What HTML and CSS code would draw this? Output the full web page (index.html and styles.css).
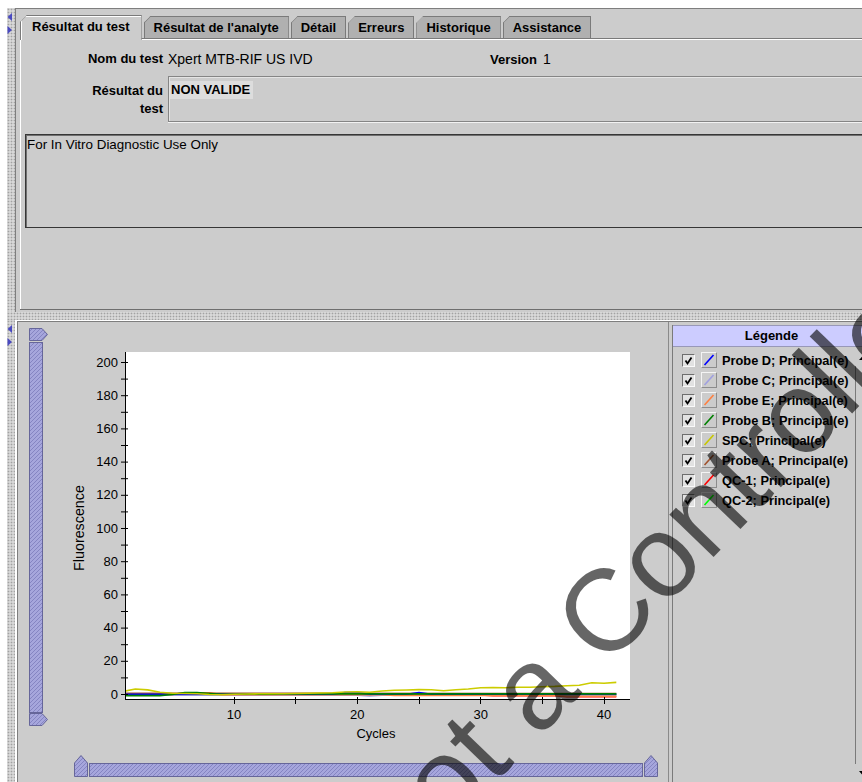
FILE: index.html
```html
<!DOCTYPE html>
<html lang="fr">
<head>
<meta charset="utf-8">
<title>Résultat du test</title>
<link rel="stylesheet" href="styles.css">
</head>
<body>
<div class="app">
  <div class="row row-top">
    <div class="gutter"></div>
    <div class="divider-v">
      <svg class="arrow" viewBox="0 0 6 8"><polygon points="5,0 0.5,4 5,8"/></svg>
      <svg class="arrow" viewBox="0 0 6 8"><polygon points="0.5,0 5,4 0.5,8"/></svg>
    </div>
    <div class="pane pane-top">
      <div class="tabs">
        <div class="tab selected">Résultat du test</div>
        <div class="tab">Résultat de l'analyte</div>
        <div class="tab">Détail</div>
        <div class="tab">Erreurs</div>
        <div class="tab">Historique</div>
        <div class="tab">Assistance</div>
      </div>
      <div class="tab-body">
        <div class="form">
          <div class="lbl">Nom du test</div>
          <div class="val">
            <span class="test-name">Xpert MTB-RIF US IVD</span>
            <b class="ver-lbl">Version</b>
            <span class="ver">1</span>
          </div>
          <div class="lbl lbl-multi">Résultat du<br>test</div>
          <div class="result-box"><span class="result">NON VALIDE</span></div>
          <div class="note">For In Vitro Diagnostic Use Only</div>
        </div>
      </div>
    </div>
  </div>

  <div class="divider-h"></div>

  <div class="row row-bottom">
    <div class="gutter"></div>
    <div class="divider-v">
      <svg class="arrow" viewBox="0 0 6 8"><polygon points="5,0 0.5,4 5,8"/></svg>
      <svg class="arrow" viewBox="0 0 6 8"><polygon points="0.5,0 5,4 0.5,8"/></svg>
    </div>
    <div class="pane pane-bottom">
      <div class="chart-panel">
        <div class="chart-row">
          <svg class="vslider" width="19" height="398" viewBox="0 0 19 398">
            <defs>
              <pattern id="hatch-v" width="4" height="4" patternUnits="userSpaceOnUse">
                <rect width="4" height="4" fill="#a6a6dc"/>
                <path d="M-1,1 L1,-1 M0,4 L4,0 M3,5 L5,3" stroke="#8585c2" stroke-width="1"/>
              </pattern>
            </defs>
            <path d="M0.5,0.5 H13 L18.5,6.5 L13,12.5 H0.5 Z" fill="url(#hatch-v)" stroke="#66669a"/>
            <rect x="0.5" y="14.5" width="13" height="370" fill="url(#hatch-v)" stroke="#66669a"/>
            <path d="M0.5,385.5 H13 L18.5,391.5 L13,397.5 H0.5 Z" fill="url(#hatch-v)" stroke="#66669a"/>
          </svg>

          <svg class="chart" width="605" height="405" viewBox="0 0 605 405">
            <defs>
              <clipPath id="plot-clip"><rect x="71" y="12" width="504" height="347"/></clipPath>
            </defs>
            <rect x="71" y="12" width="504" height="347" fill="#fff"/>

            <g class="series" clip-path="url(#plot-clip)" fill="none" stroke-width="1.6">
              <polyline stroke="#00ff00" points="68,354.8 561.3,354.8"/>
              <polyline stroke="#ff0000" points="68,355 425.7,355 438,355.6 499.7,355.6 512,356.8 561.3,356.8"/>
              <polyline stroke="#9999dd" points="68,355.2 302.3,355.2 314.7,356 327,355.2 561.3,355.2"/>
              <polyline stroke="#ff8040" points="68,354.5 117.3,354.5 129.7,352.8 154.3,352.8 166.7,354.6 327,354.6 339.3,355.5 499.7,355.5 512,356.3 561.3,356.3"/>
              <polyline stroke="#a0522d" points="68,353.3 240.7,353.4 561.3,353.5"/>
              <polyline stroke="#0000ff" points="68,354.3 277.7,354.3 290,352.6 302.3,352.6 314.7,354.3 351.7,354.3 364,352.6 376.3,354.3 561.3,354.3"/>
              <polyline stroke="#008000" points="68,355.6 105,355.6 117.3,354.5 129.7,352.6 142,352.6 154.3,353.5 166.7,354.2 216,354.2 228.3,353.9 561.3,353.9"/>
              <polyline stroke="#cccc00" points="68,351.5 80.3,349 92.7,349.9 105,352.3 117.3,353.2 129.7,353.5 142,353.7 154.3,354.5 166.7,354.8 179,354.3 191.3,354 203.7,353.8 216,353.7 228.3,353.8 240.7,353.5 253,353.2 265.3,353 277.7,352.7 290,352 302.3,351.8 314.7,352.3 327,351 339.3,350.2 351.7,350 364,349.6 376.3,349.7 388.7,350.7 401,349.7 413.3,349 425.7,347.8 438,347.5 450.3,347.8 462.7,347.2 475,347.2 487.3,346.7 499.7,346.4 512,345.8 524.3,345.3 536.7,342.8 549,343.2 561.3,342.4"/>
            </g>

            <g class="axes" stroke="#000" stroke-width="1" fill="none">
              <line x1="70.5" y1="12" x2="70.5" y2="360"/>
              <line x1="70" y1="359.5" x2="575" y2="359.5"/>
              <path d="M66,354.5H73 M66,337.9H73 M66,321.3H73 M66,304.7H73 M66,288.1H73 M66,271.5H73 M66,254.9H73 M66,238.3H73 M66,221.7H73 M66,205.1H73 M66,188.5H73 M66,171.9H73 M66,155.3H73 M66,138.7H73 M66,122.1H73 M66,105.5H73 M66,88.9H73 M66,72.3H73 M66,55.7H73 M66,39.1H73 M66,22.5H73"/>
              <path d="M179.5,357V364 M240.5,357V364 M302.5,357V364 M364.5,357V364 M425.5,357V364 M487.5,357V364 M549.5,357V364"/>
            </g>

            <g class="ticks-y" text-anchor="end">
              <text x="63" y="358.5">0</text>
              <text x="63" y="325.3">20</text>
              <text x="63" y="292.1">40</text>
              <text x="63" y="258.9">60</text>
              <text x="63" y="225.7">80</text>
              <text x="63" y="192.5">100</text>
              <text x="63" y="159.3">120</text>
              <text x="63" y="126.1">140</text>
              <text x="63" y="92.9">160</text>
              <text x="63" y="59.7">180</text>
              <text x="63" y="26.5">200</text>
            </g>
            <g class="ticks-x" text-anchor="middle">
              <text x="179" y="379">10</text>
              <text x="302.3" y="379">20</text>
              <text x="425.7" y="379">30</text>
              <text x="549" y="379">40</text>
            </g>
            <text class="axis-title" x="321" y="398" text-anchor="middle">Cycles</text>
            <text class="axis-title y-title" x="0" y="0" text-anchor="middle" transform="translate(29 188) rotate(-90)">Fluorescence</text>
          </svg>
        </div>

        <svg class="hslider" width="584" height="22" viewBox="0 0 584 22">
          <defs>
            <pattern id="hatch-h" width="4" height="4" patternUnits="userSpaceOnUse">
              <rect width="4" height="4" fill="#a6a6dc"/>
              <path d="M-1,1 L1,-1 M0,4 L4,0 M3,5 L5,3" stroke="#8585c2" stroke-width="1"/>
            </pattern>
          </defs>
          <path d="M0.5,21.5 V8 L7,0.5 L13.5,8 V21.5 Z" fill="url(#hatch-h)" stroke="#66669a"/>
          <rect x="15.5" y="8.5" width="553" height="13" fill="url(#hatch-h)" stroke="#66669a"/>
          <path d="M570.5,21.5 V8 L577,0.5 L583.5,8 V21.5 Z" fill="url(#hatch-h)" stroke="#66669a"/>
        </svg>
      </div>

      <div class="legend-panel">
        <div class="legend">
          <div class="legend-head">Légende</div>
          <div class="legend-body">
            <ul class="legend-list">
              <li><span class="cb"><svg viewBox="0 0 11 11"><path d="M2.5,5.5 L4.5,8.5 L8.5,2.5"/></svg></span><span class="sw"><svg viewBox="0 0 14 14"><line x1="2.5" y1="12" x2="11.5" y2="2" stroke="#0000ff"/></svg></span><span class="name">Probe D; Principal(e)</span></li>
              <li><span class="cb"><svg viewBox="0 0 11 11"><path d="M2.5,5.5 L4.5,8.5 L8.5,2.5"/></svg></span><span class="sw"><svg viewBox="0 0 14 14"><line x1="2.5" y1="12" x2="11.5" y2="2" stroke="#a0a0e0"/></svg></span><span class="name">Probe C; Principal(e)</span></li>
              <li><span class="cb"><svg viewBox="0 0 11 11"><path d="M2.5,5.5 L4.5,8.5 L8.5,2.5"/></svg></span><span class="sw"><svg viewBox="0 0 14 14"><line x1="2.5" y1="12" x2="11.5" y2="2" stroke="#ff8040"/></svg></span><span class="name">Probe E; Principal(e)</span></li>
              <li><span class="cb"><svg viewBox="0 0 11 11"><path d="M2.5,5.5 L4.5,8.5 L8.5,2.5"/></svg></span><span class="sw"><svg viewBox="0 0 14 14"><line x1="2.5" y1="12" x2="11.5" y2="2" stroke="#008000"/></svg></span><span class="name">Probe B; Principal(e)</span></li>
              <li><span class="cb"><svg viewBox="0 0 11 11"><path d="M2.5,5.5 L4.5,8.5 L8.5,2.5"/></svg></span><span class="sw"><svg viewBox="0 0 14 14"><line x1="2.5" y1="12" x2="11.5" y2="2" stroke="#c8c800"/></svg></span><span class="name">SPC; Principal(e)</span></li>
              <li><span class="cb"><svg viewBox="0 0 11 11"><path d="M2.5,5.5 L4.5,8.5 L8.5,2.5"/></svg></span><span class="sw"><svg viewBox="0 0 14 14"><line x1="2.5" y1="12" x2="11.5" y2="2" stroke="#a0522d"/></svg></span><span class="name">Probe A; Principal(e)</span></li>
              <li><span class="cb"><svg viewBox="0 0 11 11"><path d="M2.5,5.5 L4.5,8.5 L8.5,2.5"/></svg></span><span class="sw"><svg viewBox="0 0 14 14"><line x1="2.5" y1="12" x2="11.5" y2="2" stroke="#ff0000"/></svg></span><span class="name">QC-1; Principal(e)</span></li>
              <li><span class="cb"><svg viewBox="0 0 11 11"><path d="M2.5,5.5 L4.5,8.5 L8.5,2.5"/></svg></span><span class="sw"><svg viewBox="0 0 14 14"><line x1="2.5" y1="12" x2="11.5" y2="2" stroke="#00ff00"/></svg></span><span class="name">QC-2; Principal(e)</span></li>
            </ul>
            <div class="vscroll">
              <div class="sbtn"><svg viewBox="0 0 8 5"><polygon points="0,5 4,0.5 8,5"/></svg></div>
              <div class="strack"></div>
              <div class="sbtn"><svg viewBox="0 0 8 5"><polygon points="0,0 8,0 4,4.5"/></svg></div>
            </div>
          </div>
        </div>
      </div>
    </div>
  </div>

  <div class="stamp">Not a Controlled Copy</div>
</div>
</body>
</html>
```

FILE: styles.css
```css
* { box-sizing: border-box; }

html, body {
  margin: 0;
  padding: 0;
  background: #fff;
}

body {
  font-family: "Liberation Sans", Arial, Helvetica, sans-serif;
  font-size: 13px;
  color: #000;
}

.app {
  position: relative;
  width: 862px;
  height: 782px;
  overflow: hidden;
  background: #fff;
  display: flex;
  flex-direction: column;
}

/* split pane rows */
.row {
  display: flex;
  width: 900px;
  flex: none;
}
.row-top { height: 304px; margin-top: 8px; }
.row-bottom { height: 462px; }

.gutter {
  width: 7px;
  flex: none;
  background: #fff;
}

.divider-v,
.divider-h {
  background-color: #d8d8d8;
  background-image: radial-gradient(circle, #a2a2a2 0.75px, transparent 1.1px);
  background-size: 3px 3px;
}

.divider-v {
  width: 8px;
  flex: none;
  display: flex;
  flex-direction: column;
  gap: 5px;
  padding: 5px 0 0 0;
}

.divider-h {
  height: 8px;
  width: 893px;
  margin-left: 7px;
  flex: none;
}

.arrow {
  display: block;
  width: 6px;
  height: 8px;
  fill: #4a4ac0;
}

.pane {
  flex: 1;
  background: #cccccc;
}

.pane-top {
  border-top: 1px solid #7e7e7e;
  border-left: 1px solid #7e7e7e;
  padding: 6px 0 0 4px;
}

.pane-bottom {
  margin: 1px 0 0 2px;
  border-top: 1px solid #7e7e7e;
  border-left: 1px solid #7e7e7e;
  display: flex;
}

/* tabs */
.tabs {
  display: flex;
  align-items: flex-end;
  height: 23px;
  position: relative;
  z-index: 1;
}

.tab {
  position: relative;
  height: 22px;
  padding: 0 9px;
  margin-right: 2px;
  line-height: 21px;
  font-weight: bold;
  white-space: nowrap;
  background: #b0b0b0;
  border: 1px solid #7a7a7a;
  border-bottom: 0;
  clip-path: polygon(7px 0, 100% 0, 100% 100%, 0 100%, 0 7px);
}

.tab::before {
  content: "";
  position: absolute;
  left: -1px;
  top: 5px;
  width: 9px;
  height: 1px;
  background: #7a7a7a;
  transform-origin: 0 0;
  transform: rotate(-45deg);
}

.tab.selected {
  height: 25px;
  margin-bottom: -2px;
  padding: 0 11px;
  line-height: 22px;
  background: #cccccc;
  box-shadow: inset 1px 1px 0 #fff;
}

.tab-body {
  height: 272px;
  background: #cccccc;
  border-top: 1px solid #7a7a7a;
  border-bottom: 1px solid #6e6e6e;
  box-shadow: inset 1px 1px 0 #fff;
  padding: 11px 0 0 1px;
}

/* test summary form */
.form {
  display: grid;
  grid-template-columns: 142px 1fr;
  column-gap: 5px;
  align-items: start;
}

.lbl {
  font-weight: bold;
  text-align: right;
  line-height: 18px;
  white-space: nowrap;
}

.val {
  display: flex;
  align-items: baseline;
  line-height: 18px;
}

.test-name {
  width: 322px;
  flex: none;
  font-size: 14px;
}

.ver {
  margin-left: 6px;
  font-size: 14px;
}

.lbl-multi {
  margin-top: 7px;
  padding-top: 6px;
}

.result-box {
  margin-top: 7px;
  height: 46px;
  border-top: 1px solid #858585;
  border-left: 1px solid #858585;
  border-bottom: 1px solid #858585;
  box-shadow: 0 1px 0 #f2f2f2, inset 1px 1px 0 #e4e4e4;
  padding: 4px 0 0 1px;
}

.result {
  display: inline-block;
  font-weight: bold;
  line-height: 18px;
  padding: 0 3px 0 1px;
  background: #dddddd;
}

.note {
  grid-column: 1 / -1;
  margin: 12px 0 0 4px;
  height: 94px;
  border: 1px solid #363636;
  box-shadow: inset 1px 1px 0 #707070;
  padding: 2px 0 0 1px;
  font-size: 13.4px;
  line-height: 16px;
}

/* chart */
.chart-panel {
  width: 650px;
  flex: none;
  display: flex;
  flex-direction: column;
}

.chart-row {
  display: flex;
  align-items: flex-start;
}

.vslider {
  display: block;
  flex: none;
  margin: 6px 0 0 11px;
}

.chart {
  display: block;
  flex: none;
  margin: 18px 0 0 7px;
  font-family: "Liberation Sans", Arial, sans-serif;
}

.chart text {
  font-size: 13px;
  fill: #000;
}

.chart .y-title {
  font-size: 14.3px;
}

.hslider {
  display: block;
  margin: 10px 0 0 56px;
}

/* legend */
.legend-panel {
  flex: none;
  width: 232px;
  border-left: 1px solid #8a8a8a;
  padding: 3px 0 0 3px;
  display: flex;
  flex-direction: column;
}

.legend {
  width: 199px;
  flex: 1;
  display: flex;
  flex-direction: column;
  border-left: 1px solid #7a7a7a;
}

.legend-head {
  height: 22px;
  flex: none;
  background: #ccccff;
  border: 1px solid #9898b8;
  border-left: 0;
  text-align: center;
  font-weight: bold;
  line-height: 20px;
}

.legend-body {
  flex: 1;
  display: flex;
  margin-top: 1px;
}

.legend-list {
  list-style: none;
  margin: 0;
  padding: 2px 0 0 9px;
  flex: 1;
}

.legend-list li {
  display: flex;
  align-items: center;
  height: 20px;
}

.cb {
  width: 13px;
  height: 13px;
  flex: none;
  background: #e2e2e2;
  border: 1px solid;
  border-color: #6e6e6e #fafafa #fafafa #6e6e6e;
  display: flex;
}

.cb svg {
  width: 11px;
  height: 11px;
  fill: none;
  stroke: #000;
  stroke-width: 1.8;
}

.sw {
  width: 16px;
  height: 16px;
  flex: none;
  margin-left: 6px;
  background: #cccccc;
  border: 1px solid;
  border-color: #f4f4f4 #8c8c8c #8c8c8c #f4f4f4;
  display: flex;
}

.sw svg {
  width: 14px;
  height: 14px;
  stroke-width: 1.6;
}

.name {
  margin-left: 5px;
  font-weight: bold;
  font-size: 12.8px;
  white-space: nowrap;
}

.vscroll {
  width: 16px;
  flex: none;
  display: flex;
  flex-direction: column;
}

.sbtn {
  height: 18px;
  flex: none;
  display: flex;
  align-items: center;
  justify-content: center;
}

.sbtn svg {
  width: 8px;
  height: 5px;
  fill: #000;
}

.strack {
  flex: 1;
  border-left: 1px solid #7a7a7a;
}

/* diagonal stamp laid over the whole window */
.stamp {
  position: absolute;
  left: 390px;
  top: 852px;
  font-family: "Liberation Sans", Arial, sans-serif;
  font-size: 116px;
  line-height: 0;
  white-space: nowrap;
  color: rgba(0, 0, 0, 0.6);
  transform-origin: 0 40px;
  transform: rotate(-46deg);
  pointer-events: none;
}
```
